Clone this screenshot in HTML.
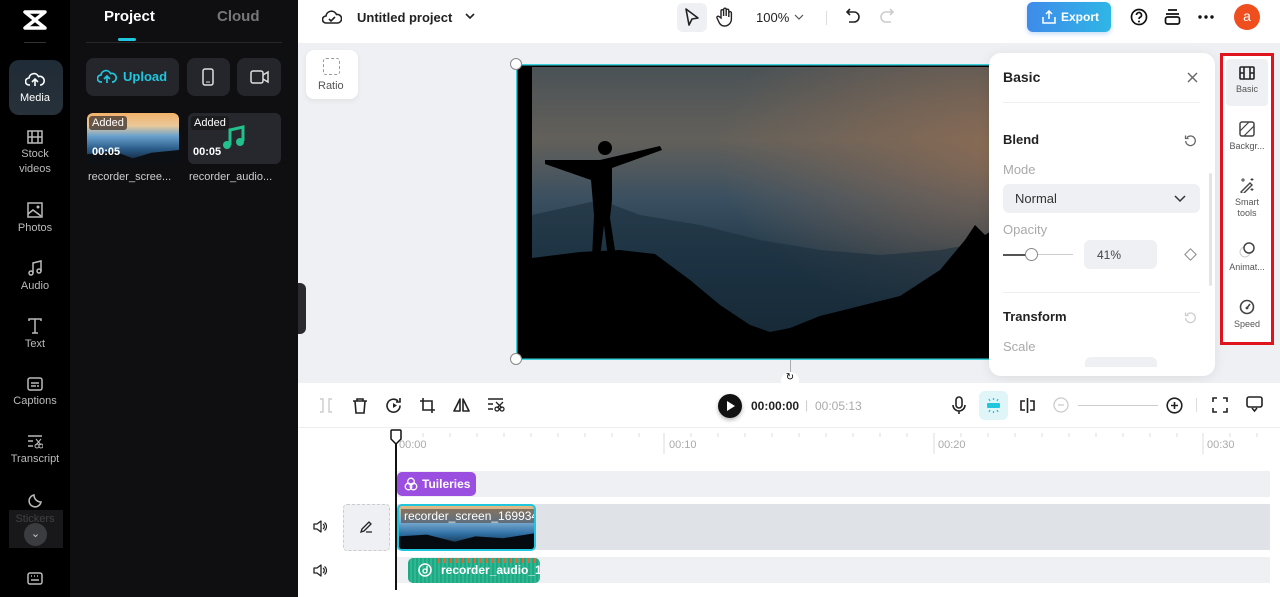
<!DOCTYPE html>
<html><head><meta charset="utf-8"><style>
*{box-sizing:border-box;margin:0;padding:0}
body{width:1280px;height:597px;overflow:hidden;font-family:"Liberation Sans",sans-serif;background:#fff;position:relative}
.a{position:absolute}
.nav{left:0;top:0;width:70px;height:597px;background:#000}
.ni{position:absolute;left:0;width:70px;text-align:center;color:#bbb;font-size:11px;line-height:15px}
.ni svg{display:block;margin:0 auto 3px}
.panel{left:70px;top:0;width:228px;height:597px;background:#0f0f12}
.btn{background:#25262b;border-radius:8px;position:absolute}
.rt{position:absolute;left:0;width:50px;text-align:center;font-size:9px;color:#555;line-height:11px}
.rt svg{display:block;margin:0 auto 4px}
.ic{position:absolute}
</style></head><body>
<!-- left nav -->
<div class="a nav">
 <svg class="ic" style="left:22px;top:9px" width="26" height="22" viewBox="0 0 26 22"><path d="M3 3H23L3 19H23Z" fill="none" stroke="#fff" stroke-width="3.5" stroke-linejoin="round"/></svg>
 <div class="a" style="left:24px;top:42px;width:22px;height:1px;background:#333"></div>
 <div class="a" style="left:9px;top:60px;width:54px;height:55px;border-radius:10px;background:linear-gradient(#1f2b36,#27313a)"></div>
 <div class="ni" style="top:72px;color:#fff"><svg width="20" height="16" viewBox="0 0 20 16"><path d="M5 13H4a3.5 3.5 0 0 1 0-7 5 5 0 0 1 9.5-1.5A4 4 0 0 1 16 13h-1M10 14V7m-3 3l3-3 3 3" fill="none" stroke="#fff" stroke-width="1.6"/></svg>Media</div>
 <div class="ni" style="top:130px"><svg width="16" height="14" viewBox="0 0 16 14"><rect x="1" y="1" width="14" height="12" fill="none" stroke="#bbb" stroke-width="1.5"/><path d="M5 1v12M11 1v12M1 7h14" stroke="#bbb" stroke-width="1.5"/></svg>Stock<br>videos</div>
 <div class="ni" style="top:202px"><svg width="16" height="16" viewBox="0 0 16 16"><rect x="1" y="1" width="14" height="14" fill="none" stroke="#bbb" stroke-width="1.5"/><path d="M1 12l5-4 8 6" fill="none" stroke="#bbb" stroke-width="1.5"/><circle cx="11" cy="5" r="1.5" fill="#bbb"/></svg>Photos</div>
 <div class="ni" style="top:260px"><svg width="16" height="16" viewBox="0 0 16 16"><path d="M6 13V3l8-2v10" fill="none" stroke="#bbb" stroke-width="1.5"/><circle cx="4" cy="13" r="2" fill="none" stroke="#bbb" stroke-width="1.5"/><circle cx="12" cy="11" r="2" fill="none" stroke="#bbb" stroke-width="1.5"/></svg>Audio</div>
 <div class="ni" style="top:318px"><svg width="16" height="16" viewBox="0 0 16 16"><path d="M2 3V1h12v2M8 1v14M5 15h6" fill="none" stroke="#bbb" stroke-width="1.5"/></svg>Text</div>
 <div class="ni" style="top:377px"><svg width="16" height="14" viewBox="0 0 16 14"><rect x="1" y="1" width="14" height="12" rx="2" fill="none" stroke="#bbb" stroke-width="1.5"/><path d="M4 6h8M4 9h5M10 9h2" stroke="#bbb" stroke-width="1.5"/></svg>Captions</div>
 <div class="ni" style="top:435px"><svg width="16" height="14" viewBox="0 0 16 14"><path d="M1 1h14M1 6h5M1 11h5" stroke="#bbb" stroke-width="1.5"/><circle cx="10" cy="11" r="2" fill="none" stroke="#bbb"/><circle cx="14" cy="11" r="2" fill="none" stroke="#bbb"/><path d="M9 4l5 6M14 4l-5 6" stroke="#bbb"/></svg>Transcript</div>
 <div class="ni" style="top:493px;color:#666"><svg width="16" height="16" viewBox="0 0 16 16"><path d="M14 9A6 6 0 1 1 7 2a7 7 0 0 0 7 7z" fill="none" stroke="#bbb" stroke-width="1.5"/></svg>Stickers</div>
 <div class="a" style="left:9px;top:510px;width:54px;height:38px;background:rgba(40,40,45,.6)"></div>
 <div class="a" style="left:24px;top:523px;width:23px;height:23px;border-radius:50%;background:#3b3c40;color:#ccc;font-size:11px;text-align:center;line-height:22px">⌄</div>
 <svg class="ic" style="left:27px;top:572px" width="16" height="13" viewBox="0 0 16 13"><rect x="1" y="1" width="14" height="11" rx="2" fill="none" stroke="#bbb" stroke-width="1.5"/><path d="M4 4h1M7 4h1M10 4h1M4 8h8" stroke="#bbb" stroke-width="1.5"/></svg>
</div>
<!-- panel -->
<div class="a panel">
 <div class="a" style="left:34px;top:8px;color:#fff;font-size:15px;font-weight:bold">Project</div>
 <div class="a" style="left:147px;top:8px;color:#777;font-size:15px;font-weight:bold">Cloud</div>
 <div class="a" style="left:48px;top:38px;width:18px;height:3px;background:#1fc6de;border-radius:2px"></div>
 <div class="a" style="left:16px;top:42px;width:196px;height:1px;background:#26272b"></div>
 <div class="btn" style="left:16px;top:58px;width:93px;height:38px"><svg class="ic" style="left:11px;top:11px" width="20" height="16" viewBox="0 0 20 16"><path d="M5 13H4a3.5 3.5 0 0 1 0-7 5 5 0 0 1 9.5-1.5A4 4 0 0 1 16 13h-1M10 14V7m-3 3l3-3 3 3" fill="none" stroke="#1fc6de" stroke-width="1.7"/></svg><span class="a" style="left:37px;top:11px;color:#1fc6de;font-weight:bold;font-size:13px">Upload</span></div>
 <div class="btn" style="left:117px;top:58px;width:43px;height:38px"><svg class="ic" style="left:15px;top:10px" width="12" height="18" viewBox="0 0 12 18"><rect x="1" y="1" width="10" height="16" rx="2" fill="none" stroke="#ddd" stroke-width="1.5"/><path d="M4 14h4" stroke="#ddd"/></svg></div>
 <div class="btn" style="left:167px;top:58px;width:44px;height:38px"><svg class="ic" style="left:13px;top:12px" width="19" height="14" viewBox="0 0 19 14"><rect x="1" y="1" width="12" height="12" rx="2" fill="none" stroke="#ddd" stroke-width="1.5"/><path d="M13 5l5-3v10l-5-3" fill="none" stroke="#ddd" stroke-width="1.5"/></svg></div>
 <div class="a" style="left:17px;top:113px;width:92px;height:51px;border-radius:6px;overflow:hidden;background:linear-gradient(#f3b26a 0%,#e9c89a 25%,#6aa2cf 45%,#2c5d8a 70%,#0d1a28 100%)">
  <div class="a" style="left:0;bottom:0;width:92px;height:14px;background:#0c1015;clip-path:polygon(0 30%,30% 10%,50% 60%,70% 20%,100% 0,100% 100%,0 100%)"></div>
  <div class="a" style="left:2px;top:3px;background:rgba(60,50,45,.75);color:#fff;font-size:11px;padding:1px 3px;border-radius:3px">Added</div>
  <div class="a" style="left:5px;top:33px;color:#fff;font-size:11px;font-weight:bold">00:05</div>
 </div>
 <div class="a" style="left:118px;top:113px;width:93px;height:51px;border-radius:6px;background:#27282d">
  <div class="a" style="left:3px;top:3px;background:#1b1b1e;color:#fff;font-size:11px;padding:1px 3px;border-radius:3px">Added</div>
  <div class="a" style="left:5px;top:33px;color:#fff;font-size:11px;font-weight:bold">00:05</div>
  <svg class="ic" style="left:33px;top:12px" width="25" height="26" viewBox="0 0 25 26"><path d="M9 20V5l13-3v14" fill="none" stroke="#22c08a" stroke-width="3"/><circle cx="6" cy="20" r="4" fill="#22c08a"/><circle cx="19" cy="17" r="4" fill="#22c08a"/></svg>
 </div>
 <div class="a" style="left:18px;top:171px;color:#ccc;font-size:11px">recorder_scree...</div>
 <div class="a" style="left:119px;top:171px;color:#ccc;font-size:11px">recorder_audio...</div>
</div>
<!-- top bar -->
<div class="a" style="left:298px;top:0;width:982px;height:43px;background:#fff"></div>
<svg class="ic" style="left:322px;top:8px" width="20" height="18" viewBox="0 0 20 18"><path d="M5 15H4a3.5 3.5 0 0 1 0-7 5.5 5.5 0 0 1 10.5-1.5A4 4 0 0 1 16 15z" fill="none" stroke="#222" stroke-width="1.6"/><path d="M7 11l2 2 4-4" fill="none" stroke="#222" stroke-width="1.6"/></svg>
<div class="a" style="left:357px;top:10px;font-size:13px;font-weight:bold;color:#222">Untitled project</div>
<svg class="ic" style="left:465px;top:13px" width="10" height="7" viewBox="0 0 10 7"><path d="M1 1l4 4 4-4" fill="none" stroke="#222" stroke-width="1.6"/></svg>
<div class="a" style="left:677px;top:3px;width:30px;height:29px;background:#eef0f3;border-radius:6px"></div>
<svg class="ic" style="left:684px;top:8px" width="16" height="19" viewBox="0 0 16 19"><path d="M2 1l12 9-6 1-3 6z" fill="none" stroke="#222" stroke-width="1.6" stroke-linejoin="round"/></svg>
<svg class="ic" style="left:716px;top:7px" width="18" height="20" viewBox="0 0 18 20"><path d="M5 11V4a1.3 1.3 0 0 1 2.6 0v5V2.5a1.3 1.3 0 0 1 2.6 0V9V3.5a1.3 1.3 0 0 1 2.6 0V10V6a1.3 1.3 0 0 1 2.6 0v6a7 7 0 0 1-7 7 6 6 0 0 1-5-3L1 11a1.3 1.3 0 0 1 2-1.5z" fill="none" stroke="#222" stroke-width="1.4"/></svg>
<div class="a" style="left:756px;top:10px;font-size:13px;color:#222">100%</div>
<svg class="ic" style="left:794px;top:14px" width="10" height="6" viewBox="0 0 10 6"><path d="M1 1l4 4 4-4" fill="none" stroke="#555" stroke-width="1.2"/></svg>
<div class="a" style="left:826px;top:11px;width:1px;height:14px;background:#ddd"></div>
<svg class="ic" style="left:845px;top:8px" width="16" height="18" viewBox="0 0 16 18"><path d="M5 1L2 4l3 3M2 4h7a5 5 0 0 1 0 10H4" fill="none" stroke="#222" stroke-width="1.6"/></svg>
<svg class="ic" style="left:879px;top:8px" width="16" height="18" viewBox="0 0 16 18"><path d="M11 1l3 3-3 3M14 4H7a5 5 0 0 0 0 10h5" fill="none" stroke="#ccc" stroke-width="1.6"/></svg>
<div class="a" style="left:1027px;top:2px;width:84px;height:30px;border-radius:6px;background:linear-gradient(90deg,#3f8bea,#2fb6e6);box-shadow:0 2px 5px rgba(60,140,230,.3)"></div>
<svg class="ic" style="left:1042px;top:10px" width="14" height="14" viewBox="0 0 14 14"><path d="M7 9V1M4 4l3-3 3 3M1 7v6h12V7" fill="none" stroke="#fff" stroke-width="1.5"/></svg>
<div class="a" style="left:1061px;top:10px;color:#fff;font-size:12px;font-weight:bold">Export</div>
<svg class="ic" style="left:1130px;top:8px" width="18" height="18" viewBox="0 0 18 18"><circle cx="9" cy="9" r="7.5" fill="none" stroke="#111" stroke-width="1.7"/><path d="M6.5 7a2.5 2.5 0 1 1 3.5 2.3c-.7.4-1 .9-1 1.7" fill="none" stroke="#111" stroke-width="1.7"/><circle cx="9" cy="13.5" r="1" fill="#111"/></svg>
<svg class="ic" style="left:1164px;top:8px" width="17" height="18" viewBox="0 0 17 18"><path d="M4 2h9M2 6h13" stroke="#111" stroke-width="1.7"/><rect x="1.5" y="9" width="14" height="7" rx="2" fill="none" stroke="#111" stroke-width="1.7"/></svg>
<svg class="ic" style="left:1198px;top:15px" width="16" height="4" viewBox="0 0 16 4"><circle cx="2" cy="2" r="1.7" fill="#111"/><circle cx="8" cy="2" r="1.7" fill="#111"/><circle cx="14" cy="2" r="1.7" fill="#111"/></svg>
<div class="a" style="left:1234px;top:4px;width:26px;height:26px;border-radius:50%;background:#ef4e1f;color:#fff;font-size:14px;text-align:center;line-height:24px">a</div>
<!-- canvas area -->
<div class="a" style="left:298px;top:43px;width:982px;height:340px;background:#eef0f3"></div>
<div class="a" style="left:298px;top:283px;width:8px;height:51px;background:#2a2a2e;border-radius:0 6px 6px 0"></div>
<div class="a" style="left:306px;top:50px;width:52px;height:49px;background:#fff;border-radius:8px;box-shadow:0 2px 6px rgba(0,0,0,.06)"></div>
<div class="a" style="left:323px;top:58px;width:17px;height:17px;border:1.5px dashed #999;border-radius:3px"></div>
<div class="a" style="left:318px;top:80px;font-size:11px;color:#555">Ratio</div>
<svg class="ic" style="left:516px;top:64px" width="480" height="296" viewBox="516 64 480 296">
 <defs><linearGradient id="sky" x1="0" y1="0" x2="0" y2="1"><stop offset="0" stop-color="#4a5256"/><stop offset=".25" stop-color="#63605a"/><stop offset=".45" stop-color="#3b5060"/><stop offset=".7" stop-color="#1d3546"/><stop offset="1" stop-color="#0f1c26"/></linearGradient>
 <radialGradient id="glow" cx="1" cy=".3" r=".6"><stop offset="0" stop-color="#9a7052" stop-opacity=".7"/><stop offset="1" stop-color="#9a7052" stop-opacity="0"/></radialGradient></defs>
 <rect x="516" y="64" width="480" height="296" fill="#000"/>
 <rect x="532" y="67" width="464" height="290" fill="url(#sky)"/>
 <rect x="532" y="67" width="464" height="290" fill="url(#glow)"/>
 <path d="M532 215 L600 200 L640 215 L700 225 L760 240 L820 250 L880 255 L940 250 L996 240 L996 357 L532 357Z" fill="#1a2f3e" opacity=".6"/>
 <path d="M532 258 L580 252 L620 250 L655 254 L690 280 L720 305 L750 325 L770 332 L790 328 L820 316 L860 306 L900 296 L940 270 L965 240 L975 225 L985 235 L996 228 L996 357 L532 357Z" fill="#000"/>
 <circle cx="605" cy="148" r="7" fill="#000"/>
 <path d="M545 160 L600 160 L660 146 L662 150 L612 168 L612 200 L610 218 L616 257 L608 258 L604 225 L600 258 L592 258 L594 215 L591 180 L545 164Z" fill="#000"/>
 <rect x="516" y="64" width="480" height="296" fill="none" stroke="#3ad0dc" stroke-width="3"/>
</svg>
<div class="a" style="left:510px;top:58px;width:12px;height:12px;border-radius:50%;background:#fff;border:1px solid #888"></div>
<div class="a" style="left:510px;top:353px;width:12px;height:12px;border-radius:50%;background:#fff;border:1px solid #888"></div>
<div class="a" style="left:790px;top:360px;width:1px;height:14px;background:#aaa"></div>
<div class="a" style="left:781px;top:372px;width:18px;height:11px;border-radius:9px 9px 0 0;background:#fff;font-size:10px;text-align:center">↻</div>
<!-- property panel -->
<div class="a" style="left:989px;top:53px;width:226px;height:323px;background:#fff;border-radius:12px;box-shadow:0 2px 12px rgba(0,0,0,.08)"></div>
<div class="a" style="left:1003px;top:69px;font-size:14px;font-weight:bold;color:#222">Basic</div>
<svg class="ic" style="left:1187px;top:72px" width="11" height="11" viewBox="0 0 11 11"><path d="M1 1l9 9M10 1l-9 9" stroke="#666" stroke-width="1.4"/></svg>
<div class="a" style="left:1003px;top:102px;width:197px;height:1px;background:#eee"></div>
<div class="a" style="left:1003px;top:132px;font-size:13px;font-weight:bold;color:#222">Blend</div>
<svg class="ic" style="left:1184px;top:134px" width="13" height="13" viewBox="0 0 13 13"><path d="M3 3.5A4.8 4.8 0 1 1 1.7 7M1.5 1.5v3h3" fill="none" stroke="#666" stroke-width="1.3"/></svg>
<div class="a" style="left:1003px;top:162px;font-size:13px;color:#aaa">Mode</div>
<div class="a" style="left:1003px;top:184px;width:197px;height:29px;background:#eef0f3;border-radius:6px"></div>
<div class="a" style="left:1015px;top:191px;font-size:13px;color:#333">Normal</div>
<svg class="ic" style="left:1174px;top:195px" width="12" height="8" viewBox="0 0 12 8"><path d="M1 1l5 5 5-5" fill="none" stroke="#333" stroke-width="1.5"/></svg>
<div class="a" style="left:1003px;top:222px;font-size:13px;color:#aaa">Opacity</div>
<div class="a" style="left:1003px;top:254px;width:70px;height:1px;background:#ccc"></div>
<div class="a" style="left:1003px;top:254px;width:28px;height:2px;background:#555"></div>
<div class="a" style="left:1025px;top:248px;width:13px;height:13px;border-radius:50%;background:#fff;border:1px solid #888"></div>
<div class="a" style="left:1084px;top:240px;width:73px;height:29px;background:#eef0f3;border-radius:6px;font-size:12px;color:#444;padding:8px 0 0 13px">41%</div>
<div class="a" style="left:1186px;top:250px;width:9px;height:9px;border:1px solid #888;transform:rotate(45deg)"></div>
<div class="a" style="left:1209px;top:173px;width:3px;height:113px;background:#e4e4e4;border-radius:2px"></div>
<div class="a" style="left:1003px;top:292px;width:197px;height:1px;background:#eee"></div>
<div class="a" style="left:1003px;top:309px;font-size:13px;font-weight:bold;color:#222">Transform</div>
<svg class="ic" style="left:1184px;top:311px" width="13" height="13" viewBox="0 0 13 13"><path d="M3 3.5A4.8 4.8 0 1 1 1.7 7M1.5 1.5v3h3" fill="none" stroke="#ccc" stroke-width="1.3"/></svg>
<div class="a" style="left:1003px;top:339px;font-size:13px;color:#aaa">Scale</div>
<div class="a" style="left:1085px;top:357px;width:72px;height:10px;background:#eef0f3;border-radius:6px 6px 0 0"></div>
<!-- right tabs -->
<div class="a" style="left:1220px;top:53px;width:54px;height:292px;background:#fff;border:3px solid #e0141e"></div>
<div class="a" style="left:1226px;top:59px;width:42px;height:47px;background:#eef0f3;border-radius:4px"></div>
<div class="rt" style="left:1222px;top:66px"><svg width="16" height="14" viewBox="0 0 16 14"><rect x="1" y="1" width="14" height="12" rx="1" fill="none" stroke="#222" stroke-width="1.6"/><path d="M5 1v12M11 1v12M1 7h4M11 7h4" stroke="#222" stroke-width="1.6"/></svg>Basic</div>
<div class="rt" style="left:1222px;top:121px"><svg width="16" height="16" viewBox="0 0 16 16"><rect x="1" y="1" width="14" height="14" rx="2" fill="none" stroke="#444" stroke-width="1.5"/><path d="M1 10l9-9M5 15l10-10" stroke="#444" stroke-width="1.2"/></svg>Backgr...</div>
<div class="rt" style="left:1222px;top:177px"><svg width="16" height="16" viewBox="0 0 16 16"><path d="M2 15l9-9 2 2-9 9z" fill="none" stroke="#444" stroke-width="1.4"/><path d="M4 1v4M2 3h4M13 1v3M11.5 2.5h3M13 11v3M11.5 12.5h3" stroke="#444"/></svg>Smart<br>tools</div>
<div class="rt" style="left:1222px;top:242px"><svg width="16" height="16" viewBox="0 0 16 16"><circle cx="6" cy="10" r="5" fill="none" stroke="#ccc"/><circle cx="10" cy="6" r="5" fill="#fff" stroke="#444" stroke-width="1.5"/></svg>Animat...</div>
<div class="rt" style="left:1222px;top:299px"><svg width="16" height="16" viewBox="0 0 16 16"><circle cx="8" cy="8" r="6.5" fill="none" stroke="#444" stroke-width="1.6"/><path d="M8 9l3-4" stroke="#444" stroke-width="1.6"/><circle cx="8" cy="9" r="1.4" fill="#444"/></svg>Speed</div>
<!-- timeline toolbar -->
<div class="a" style="left:298px;top:383px;width:982px;height:45px;background:#fff;border-bottom:1px solid #eee"></div>
<svg class="ic" style="left:319px;top:398px" width="14" height="15" viewBox="0 0 14 15"><path d="M1 1h3v13H1M13 1h-3v13h3" fill="none" stroke="#ccc" stroke-width="1.4"/></svg>
<svg class="ic" style="left:352px;top:397px" width="16" height="17" viewBox="0 0 16 17"><path d="M1 4h14M5 4V2h6v2M3 4l1 12h8l1-12" fill="none" stroke="#222" stroke-width="1.6"/></svg>
<svg class="ic" style="left:386px;top:397px" width="17" height="17" viewBox="0 0 17 17"><path d="M14 8.5A6.5 6.5 0 1 1 12 4M14 1v4h-4" fill="none" stroke="#222" stroke-width="1.6"/><path d="M7 6v5l4-2.5z" fill="#222"/></svg>
<svg class="ic" style="left:419px;top:397px" width="17" height="17" viewBox="0 0 17 17"><path d="M4 1v12h12M1 4h12v12" fill="none" stroke="#222" stroke-width="1.6"/></svg>
<svg class="ic" style="left:453px;top:397px" width="17" height="16" viewBox="0 0 17 16"><path d="M7 2L1 14h6zM10 2l6 12h-6z" fill="none" stroke="#222" stroke-width="1.6" stroke-linejoin="round"/></svg>
<svg class="ic" style="left:487px;top:397px" width="18" height="16" viewBox="0 0 18 16"><path d="M1 2h15M1 7h5M1 12h5" stroke="#222" stroke-width="1.5"/><circle cx="10" cy="12" r="2" fill="none" stroke="#222" stroke-width="1.3"/><circle cx="15" cy="12" r="2" fill="none" stroke="#222" stroke-width="1.3"/><path d="M9 5l6 6M16 5l-6 6" stroke="#222" stroke-width="1.3"/></svg>
<div class="a" style="left:718px;top:394px;width:24px;height:24px;border-radius:50%;background:#111;box-shadow:0 2px 4px rgba(0,0,0,.3)"></div>
<svg class="ic" style="left:727px;top:401px" width="8" height="10" viewBox="0 0 8 10"><path d="M0 0l8 5-8 5z" fill="#fff"/></svg>
<div class="a" style="left:751px;top:399px;font-size:12px;font-weight:bold;color:#222">00:00:00</div>
<div class="a" style="left:805px;top:398px;font-size:12px;color:#ccc">|</div>
<div class="a" style="left:815px;top:399px;font-size:12px;color:#aaa">00:05:13</div>
<svg class="ic" style="left:952px;top:396px" width="14" height="19" viewBox="0 0 14 19"><rect x="4" y="1" width="6" height="11" rx="3" fill="none" stroke="#222" stroke-width="1.6"/><path d="M1 9a6 6 0 0 0 12 0M7 15v3" fill="none" stroke="#222" stroke-width="1.6"/></svg>
<div class="a" style="left:979px;top:391px;width:29px;height:29px;background:#dff5f8;border-radius:6px"></div>
<svg class="ic" style="left:985px;top:397px" width="17" height="17" viewBox="0 0 17 17"><rect x="2" y="6" width="13" height="5" rx="1" fill="#1fc6de"/><path d="M8.5 1v2M8.5 14v2M4 2l1 2M13 2l-1 2M4 15l1-2M13 15l-1-2" stroke="#1fc6de" stroke-width="1.3"/></svg>
<svg class="ic" style="left:1019px;top:397px" width="17" height="17" viewBox="0 0 17 17"><path d="M8.5 1v15M6 4H2v9h4M11 4h4v9h-4" fill="none" stroke="#222" stroke-width="1.6"/></svg>
<svg class="ic" style="left:1053px;top:397px" width="16" height="16" viewBox="0 0 16 16"><circle cx="8" cy="8" r="7" fill="none" stroke="#ccc" stroke-width="1.3"/><path d="M5 8h6" stroke="#ccc" stroke-width="1.3"/></svg>
<div class="a" style="left:1078px;top:405px;width:80px;height:1px;background:#ccc"></div>
<svg class="ic" style="left:1166px;top:397px" width="17" height="17" viewBox="0 0 17 17"><circle cx="8.5" cy="8.5" r="7.3" fill="none" stroke="#222" stroke-width="1.6"/><path d="M5 8.5h7M8.5 5v7" stroke="#222" stroke-width="1.6"/></svg>
<div class="a" style="left:1196px;top:398px;width:1px;height:14px;background:#ddd"></div>
<svg class="ic" style="left:1212px;top:397px" width="16" height="16" viewBox="0 0 16 16"><path d="M1 5V1h4M11 1h4v4M15 11v4h-4M5 15H1v-4" fill="none" stroke="#222" stroke-width="1.6"/></svg>
<svg class="ic" style="left:1246px;top:396px" width="17" height="17" viewBox="0 0 17 17"><rect x="1" y="1" width="15" height="10" rx="2" fill="none" stroke="#222" stroke-width="1.6"/><path d="M6 12l2.5 3 2.5-3" fill="none" stroke="#222" stroke-width="1.6"/></svg>
<!-- ruler -->
<div class="a" style="left:298px;top:429px;width:982px;height:168px;background:#fff"></div>
<svg class="ic" style="left:298px;top:429px" width="982" height="30">
 <g stroke="#ddd">
  <line x1="125" y1="4" x2="125" y2="8"/><line x1="152" y1="4" x2="152" y2="8"/><line x1="179" y1="4" x2="179" y2="8"/><line x1="206" y1="4" x2="206" y2="8"/><line x1="233" y1="4" x2="233" y2="8"/><line x1="260" y1="4" x2="260" y2="8"/><line x1="287" y1="4" x2="287" y2="8"/><line x1="314" y1="4" x2="314" y2="8"/><line x1="341" y1="4" x2="341" y2="8"/>
  <line x1="366" y1="4" x2="366" y2="25"/>
  <line x1="393" y1="4" x2="393" y2="8"/><line x1="420" y1="4" x2="420" y2="8"/><line x1="447" y1="4" x2="447" y2="8"/><line x1="474" y1="4" x2="474" y2="8"/><line x1="501" y1="4" x2="501" y2="8"/><line x1="528" y1="4" x2="528" y2="8"/><line x1="555" y1="4" x2="555" y2="8"/><line x1="582" y1="4" x2="582" y2="8"/><line x1="609" y1="4" x2="609" y2="8"/>
  <line x1="636" y1="4" x2="636" y2="25"/>
  <line x1="663" y1="4" x2="663" y2="8"/><line x1="690" y1="4" x2="690" y2="8"/><line x1="717" y1="4" x2="717" y2="8"/><line x1="744" y1="4" x2="744" y2="8"/><line x1="771" y1="4" x2="771" y2="8"/><line x1="798" y1="4" x2="798" y2="8"/><line x1="825" y1="4" x2="825" y2="8"/><line x1="852" y1="4" x2="852" y2="8"/><line x1="879" y1="4" x2="879" y2="8"/>
  <line x1="905" y1="4" x2="905" y2="25"/><line x1="932" y1="4" x2="932" y2="8"/><line x1="959" y1="4" x2="959" y2="8"/>
 </g>
 <g font-size="11" fill="#aaa" font-family="Liberation Sans"><text x="101" y="19">00:00</text><text x="371" y="19">00:10</text><text x="640" y="19">00:20</text><text x="909" y="19">00:30</text></g>
</svg>
<!-- tracks -->
<div class="a" style="left:396px;top:471px;width:874px;height:26px;background:#eef0f3"></div>
<div class="a" style="left:397px;top:472px;width:79px;height:24px;background:#9b4fe0;border-radius:5px;color:#fff;font-size:12px;font-weight:bold;padding:5px 0 0 25px">Tuileries</div>
<svg class="ic" style="left:404px;top:477px" width="14" height="14" viewBox="0 0 14 14"><circle cx="7" cy="4.5" r="3.3" fill="none" stroke="#fff" stroke-width="1.3"/><circle cx="4.5" cy="9.5" r="3.3" fill="none" stroke="#fff" stroke-width="1.3"/><circle cx="9.5" cy="9.5" r="3.3" fill="none" stroke="#fff" stroke-width="1.3"/></svg>
<div class="a" style="left:396px;top:504px;width:874px;height:46px;background:#dfe2e6"></div>
<div class="a" style="left:343px;top:504px;width:47px;height:47px;border:1px dashed #ccc;border-radius:4px;background:#eef0f3"></div>
<svg class="ic" style="left:359px;top:520px" width="14" height="14" viewBox="0 0 14 14"><path d="M2 12l1-3 7-7 2 2-7 7zM7 12h6" fill="none" stroke="#222" stroke-width="1.3"/></svg>
<div class="a" style="left:397px;top:504px;width:139px;height:47px;border:2px solid #1fc6de;border-radius:5px;overflow:hidden;background:linear-gradient(#e9b77b 0%,#7fb0d5 35%,#2f6fa4 65%,#0a141d 100%)">
 <div class="a" style="left:0;bottom:0;width:139px;height:18px;background:#050a10;clip-path:polygon(0 30%,20% 20%,40% 60%,55% 30%,75% 40%,100% 10%,100% 100%,0 100%)"></div>
 <div class="a" style="left:2px;top:3px;width:133px;height:14px;background:rgba(80,70,65,.6)"></div>
 <div class="a" style="left:5px;top:3px;color:#fff;font-size:12px;white-space:nowrap">recorder_screen_169934</div>
</div>
<div class="a" style="left:396px;top:557px;width:874px;height:26px;background:#eef0f3"></div>
<div class="a" style="left:408px;top:558px;width:132px;height:25px;background:repeating-linear-gradient(90deg,#20a882 0 2px,#2bb892 2px 4px);border-radius:5px;overflow:hidden">
 <div class="a" style="left:30px;top:0;width:100px;height:5px;background:repeating-linear-gradient(90deg,#e0693a 0 2px,transparent 2px 6px)"></div>
 <div class="a" style="left:33px;top:5px;color:#fff;font-size:12px;font-weight:bold;white-space:nowrap">recorder_audio_169</div>
</div>
<svg class="ic" style="left:418px;top:563px" width="14" height="14" viewBox="0 0 14 14"><circle cx="7" cy="7" r="6" fill="none" stroke="#fff" stroke-width="1.5"/><circle cx="7" cy="8" r="2" fill="none" stroke="#fff" stroke-width="1.3"/><path d="M9 8V3" stroke="#fff" stroke-width="1.3"/></svg>
<svg class="ic" style="left:313px;top:520px" width="14" height="13" viewBox="0 0 14 13"><path d="M1 4h3l4-3v11l-4-3H1z" fill="none" stroke="#222" stroke-width="1.3" stroke-linejoin="round"/><path d="M10 4a3 3 0 0 1 0 5M11.5 2.5a5 5 0 0 1 0 8" fill="none" stroke="#222" stroke-width="1.2"/></svg>
<svg class="ic" style="left:313px;top:564px" width="14" height="13" viewBox="0 0 14 13"><path d="M1 4h3l4-3v11l-4-3H1z" fill="none" stroke="#222" stroke-width="1.3" stroke-linejoin="round"/><path d="M10 4a3 3 0 0 1 0 5M11.5 2.5a5 5 0 0 1 0 8" fill="none" stroke="#222" stroke-width="1.2"/></svg>
<!-- playhead -->
<div class="a" style="left:395px;top:440px;width:2px;height:150px;background:#111"></div>
<svg class="ic" style="left:390px;top:429px" width="12" height="16" viewBox="0 0 12 16"><path d="M1 2a1 1 0 0 1 1-1h8a1 1 0 0 1 1 1v8l-5 5-5-5z" fill="#fff" stroke="#111" stroke-width="1.5"/></svg>
</body></html>
